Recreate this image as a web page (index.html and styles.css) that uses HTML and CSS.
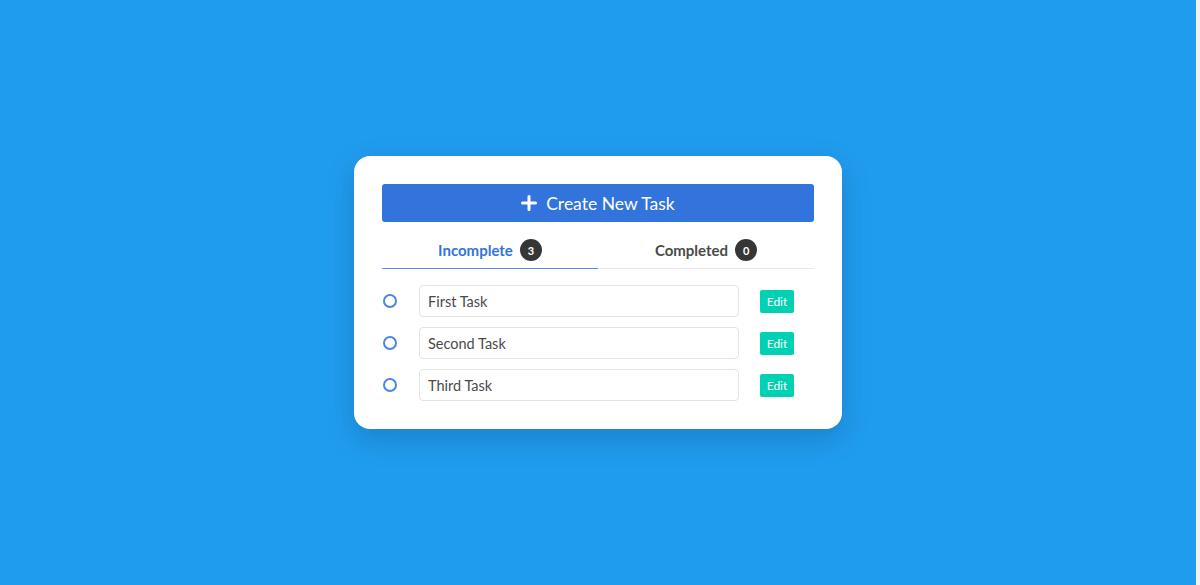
FILE: index.html
```html
<!DOCTYPE html>
<html lang="en">
<head>
<meta charset="utf-8">
<title>Tasks</title>
<link rel="stylesheet" href="styles.css">
</head>
<body>
<div class="page">
  <main class="card">
    <button class="create-btn" type="button">
      <svg class="plus" viewBox="0 0 16 16" width="16" height="16" aria-hidden="true"><path d="M8 1.5v13M1.5 8h13" stroke="#fff" stroke-width="3" stroke-linecap="round"/></svg>
      <span>Create New Task</span>
    </button>
    <nav class="tabs">
      <div class="tab active"><span>Incomplete</span><span class="badge">3</span></div>
      <div class="tab"><span>Completed</span><span class="badge">0</span></div>
    </nav>
    <ul class="tasks">
      <li class="task"><span class="check"></span><input class="task-input" type="text" value="First Task"><button class="edit-btn" type="button">Edit</button></li>
      <li class="task"><span class="check"></span><input class="task-input" type="text" value="Second Task"><button class="edit-btn" type="button">Edit</button></li>
      <li class="task"><span class="check"></span><input class="task-input" type="text" value="Third Task"><button class="edit-btn" type="button">Edit</button></li>
    </ul>
  </main>
</div>
</body>
</html>
```

FILE: styles.css
```css
html {
  background: #f1f1f1;
}
body {
  margin: 0;
  font-family: "Lato", "Noto Sans", sans-serif;
}
.page {
  width: calc(100% - 4px);
  height: 585px;
  background: #209cee;
  display: flex;
  align-items: center;
  justify-content: center;
}
.card {
  width: 432px;
  padding: 28px;
  background: #fff;
  border-radius: 16px;
  box-shadow: 0 10px 28px rgba(10, 40, 80, 0.22);
}
.create-btn {
  width: 100%;
  height: 38px;
  border: none;
  border-radius: 3px;
  background: #3273dc;
  color: #fff;
  font-family: inherit;
  font-size: 17.5px;
  display: flex;
  align-items: center;
  justify-content: center;
  gap: 9px;
  padding: 0;
}
.plus {
  width: 16px;
  height: 16px;
}
.tabs {
  display: flex;
  margin-top: 10px;
  border-bottom: 1px solid #e8e8e8;
}
.tab {
  flex: 1;
  display: flex;
  align-items: center;
  justify-content: center;
  gap: 7px;
  height: 36px;
  font-size: 15px;
  font-weight: 700;
  color: #4a4a4a;
  margin-bottom: -1px;
  border-bottom: 1px solid #e8e8e8;
}
.tab.active {
  color: #3273dc;
  border-bottom: 1px solid #5b8fe6;
}
.badge {
  width: 22px;
  height: 22px;
  border-radius: 50%;
  background: #363636;
  color: #fff;
  font-size: 11px;
  font-weight: 700;
  display: inline-flex;
  align-items: center;
  justify-content: center;
}
.tasks {
  list-style: none;
  margin: 16px 0 0;
  padding: 0;
  display: flex;
  flex-direction: column;
  gap: 10px;
}
.task {
  display: flex;
  align-items: center;
  height: 32px;
}
.check {
  width: 10px;
  height: 10px;
  margin-left: 1px;
  border: 2px solid #4a86e8;
  border-radius: 50%;
  flex: none;
}
.task-input {
  margin-left: 22px;
  width: 320px;
  height: 32px;
  box-sizing: border-box;
  border: 1px solid #e3e3e3;
  border-radius: 4px;
  padding: 0 8px;
  font-family: inherit;
  font-size: 14.5px;
  color: #4a4a4a;
  outline: none;
}
.edit-btn {
  margin-left: 21px;
  height: 23px;
  width: 34px;
  padding: 0;
  border: none;
  border-radius: 2px;
  background: #00d1b2;
  color: #fff;
  font-family: inherit;
  font-size: 12px;
}
```
